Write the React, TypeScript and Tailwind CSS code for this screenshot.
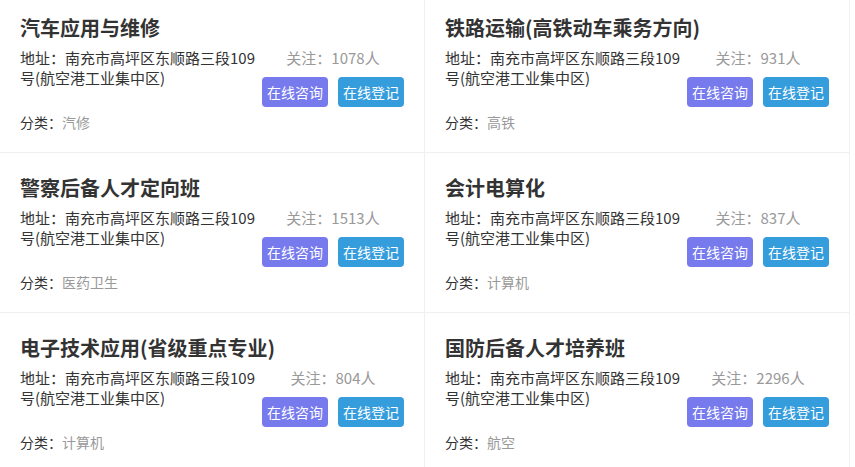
import React from "react";

const courses = [
  { title: "汽车应用与维修", follow: "1078", category: "汽修" },
  { title: "铁路运输(高铁动车乘务方向)", follow: "931", category: "高铁" },
  { title: "警察后备人才定向班", follow: "1513", category: "医药卫生" },
  { title: "会计电算化", follow: "837", category: "计算机" },
  { title: "电子技术应用(省级重点专业)", follow: "804", category: "计算机" },
  { title: "国防后备人才培养班", follow: "2296", category: "航空" },
];

const CourseCard = ({ course, first }: any) => {
  return (
    <div
      className={
        "border-r border-b border-[#f0f0f0] px-5 pb-5 " +
        (first ? "pt-[13px]" : "pt-5")
      }
    >
      <h3 className="text-[20px] leading-[30px] font-bold text-[#333]">
        {course.title}
      </h3>
      <div className="mt-[5px] flex">
        <p className="w-[242px] text-[15px] leading-[20px] text-[#333]">
          地址：南充市高坪区东顺路三段109号(航空港工业集中区)
        </p>
        <div className="w-[142px] flex flex-col items-center">
          <p className="text-[15px] leading-[20px] text-[#999]">
            关注：{course.follow}人
          </p>
          <div className="mt-[9px] flex gap-[10px]">
            <button className="h-[30px] w-[66px] rounded-[4px] bg-[#767aec] text-[14px] text-white">
              在线咨询
            </button>
            <button className="h-[30px] w-[66px] rounded-[4px] bg-[#359ddb] text-[14px] text-white">
              在线登记
            </button>
          </div>
        </div>
      </div>
      <p className="mt-[5px] text-[14px] leading-[20px] text-[#333]">
        分类：<span className="text-[#999]">{course.category}</span>
      </p>
    </div>
  );
};

const App = () => {
  return (
    <div
      className="w-[850px] bg-white grid grid-cols-2"
      style={{ fontFamily: '"Microsoft YaHei", "Noto Sans CJK SC", sans-serif' }}
    >
      {courses.map((c, i) => (
        <CourseCard key={i} course={c} first={i < 2} />
      ))}
    </div>
  );
};

export default App;
